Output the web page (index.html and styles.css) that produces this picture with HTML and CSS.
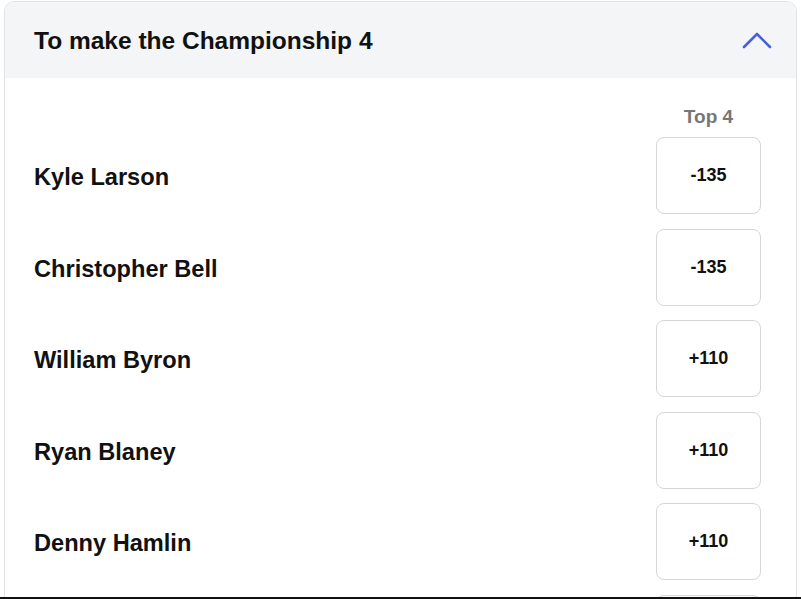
FILE: index.html
```html
<!DOCTYPE html>
<html>
<head>
<meta charset="utf-8">
<link rel="stylesheet" href="styles.css">
</head>
<body>
<div class="frame">
  <div class="card">
    <div class="header">
      <h2 class="title">To make the Championship 4</h2>
      <svg class="chevron" width="30" height="18" viewBox="0 0 30 18"><path d="M2 16 L15 3 L28 16" fill="none" stroke="#4a5fd8" stroke-width="2.6" stroke-linecap="round" stroke-linejoin="round"/></svg>
    </div>
    <div class="body">
      <div class="colhead"><span class="collabel">Top 4</span></div>
      <div class="rows">
        <div class="row"><span class="name">Kyle Larson</span><button class="odds">-135</button></div>
        <div class="row"><span class="name">Christopher Bell</span><button class="odds">-135</button></div>
        <div class="row"><span class="name">William Byron</span><button class="odds">+110</button></div>
        <div class="row"><span class="name">Ryan Blaney</span><button class="odds">+110</button></div>
        <div class="row"><span class="name">Denny Hamlin</span><button class="odds">+110</button></div>
        <div class="row"><span class="name"></span><button class="odds" aria-label="more"></button></div>
      </div>
    </div>
  </div>
</div>
</body>
</html>
```
FILE: styles.css
```css
html, body {
  margin: 0;
  padding: 0;
  background: #ffffff;
  overflow: hidden;
}
.frame {
  width: 801px;
  height: 597px;
  border-bottom: 2px solid #111;
  overflow: hidden;
  box-sizing: content-box;
  font-family: "Liberation Sans", Arial, sans-serif;
}
.card {
  margin: 1px 0 0 4px;
  width: 793px;
  box-sizing: border-box;
  border: 1px solid #e2e3e6;
  border-radius: 10px;
  overflow: hidden;
  background: #fff;
}
.header {
  height: 76px;
  background: #f4f5f7;
  display: flex;
  align-items: center;
  justify-content: space-between;
  padding: 0 24px 0 29px;
}
.title {
  margin: 0;
  font-size: 24.5px;
  font-weight: 700;
  color: #111;
  position: relative;
  top: 1px;
}
.chevron {
  display: block;
}
.body {
  padding: 28px 35px 0 29px;
}
.colhead {
  display: flex;
  justify-content: flex-end;
  height: 20px;
  margin-bottom: 11px;
}
.collabel {
  width: 105px;
  text-align: center;
  font-size: 19px;
  font-weight: 700;
  color: #777;
  line-height: 20px;
  position: relative;
  top: 1px;
}
.rows {
  display: flex;
  flex-direction: column;
  gap: 14.5px;
}
.row {
  display: flex;
  align-items: center;
  justify-content: space-between;
}
.name {
  font-size: 23.6px;
  font-weight: 700;
  color: #111;
  position: relative;
  top: 2px;
}
.odds {
  width: 105px;
  height: 77px;
  box-sizing: border-box;
  border: 1px solid #d6d6d6;
  border-radius: 8px;
  background: #fff;
  font-family: "Liberation Sans", Arial, sans-serif;
  font-size: 18px;
  font-weight: 700;
  color: #111;
  padding: 0;
}
```
